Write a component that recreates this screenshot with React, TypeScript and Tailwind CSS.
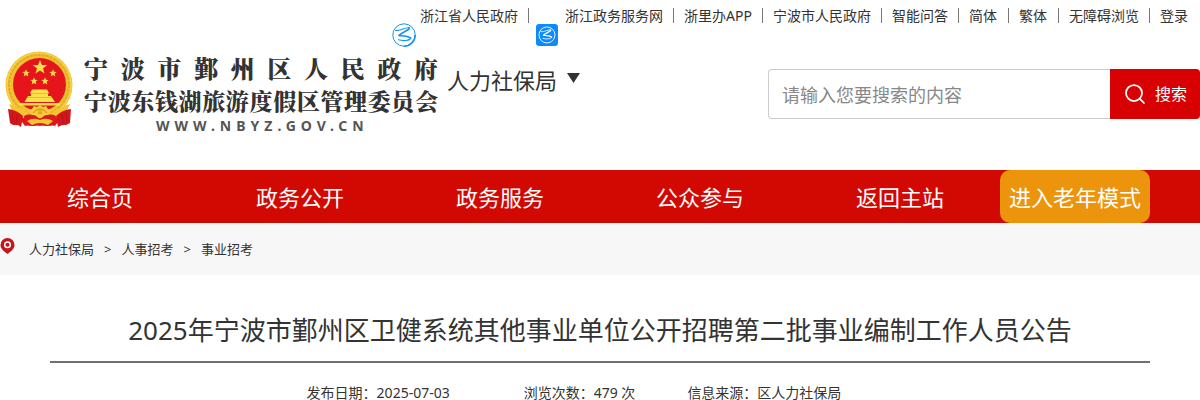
import { Search } from 'lucide-react';

const topLinks = [
  { label: '浙江省人民政府', icon: 'round' },
  { label: '浙江政务服务网', icon: 'square' },
  { label: '浙里办APP' },
  { label: '宁波市人民政府' },
  { label: '智能问答' },
  { label: '简体' },
  { label: '繁体' },
  { label: '无障碍浏览' },
  { label: '登录' },
];

const navItems = ['综合页', '政务公开', '政务服务', '公众参与', '返回主站'];

const crumbs = ['人力社保局', '人事招考', '事业招考'];

const Swirl = () => (
  <g fill="none" stroke="currentColor" strokeLinecap="round" strokeLinejoin="round">
    <path d="M3.5 7.5C8 8.5 12 4.2 17 4.8" strokeWidth="1.1" />
    <path d="M17 4.8C18.6 6.8 10 9 7.2 12.4" strokeWidth="1.8" />
    <path d="M7.2 12.4C11 13.4 16 12.6 18.6 15" strokeWidth="1.6" />
    <path d="M18.6 15C18 17.8 11 18.2 6.5 16.8" strokeWidth="1.2" />
  </g>
);

const RoundIcon = () => (
  <svg className="mt-[23px] mr-1 size-6 shrink-0 text-[#1494f0]" viewBox="0 0 24 24" aria-hidden="true">
    <circle cx="12" cy="12" r="11.2" fill="none" stroke="currentColor" strokeWidth="1" />
    <path d="M12 23.2A11.2 11.2 0 0 0 23.2 12" fill="none" stroke="currentColor" strokeWidth="1.6" />
    <Swirl />
  </svg>
);

const SquareIcon = () => (
  <svg className="mt-6 mr-[7px] size-[22px] shrink-0 text-white" viewBox="0 0 24 24" aria-hidden="true">
    <rect width="24" height="24" rx="3.5" fill="#0d8bfd" />
    <g transform="translate(2.6 2.6) scale(.78)">
      <circle cx="12" cy="12" r="11.2" fill="none" stroke="currentColor" strokeWidth="1.2" />
      <Swirl />
    </g>
  </svg>
);

const Emblem = () => (
  <svg className="h-[77px] w-[70px] shrink-0" viewBox="0 0 70 77" aria-hidden="true">
    <path d="M11 57L9 73L17 71L20 75L27 73L35 75L43 73L50 75L53 71L61 73L59 57Z" fill="#d91a1c" />
    <circle cx="34" cy="34" r="33.5" fill="#f1c232" />
    <circle cx="34" cy="34" r="30" fill="none" stroke="#e4ae24" strokeWidth="2" strokeDasharray="3 1" />
    <circle cx="34" cy="34" r="32" fill="none" stroke="#f7d64c" strokeWidth="1.2" />
    <circle cx="34.5" cy="33.5" r="26.5" fill="#e6151b" />
    <g fill="#fbe04a">
      <path d="M35 9L36.9 14.1H42.2L38 17.4L39.6 22.6L35 19.5L30.4 22.6L32 17.4L27.8 14.1H33.1Z" />
      <path d="M21 18.2L22 20.7L24.7 20.9L22.6 22.6L23.3 25.4L21 23.9L18.7 25.4L19.4 22.6L17.3 20.9L20 20.7Z" />
      <path d="M48 18.2L49 20.7L51.7 20.9L49.6 22.6L50.3 25.4L48 23.9L45.7 25.4L46.4 22.6L44.3 20.9L47 20.7Z" />
      <path d="M29 26.2L30 28.7L32.7 28.9L30.6 30.6L31.3 33.4L29 31.9L26.7 33.4L27.4 30.6L25.3 28.9L28 28.7Z" />
      <path d="M40 26.2L41 28.7L43.7 28.9L41.6 30.6L42.3 33.4L40 31.9L37.7 33.4L38.4 30.6L36.3 28.9L39 28.7Z" />
      <path d="M27 38.5H42L44 42H25ZM26 42H43V45H26ZM23 45H46L50 51H19.5Z" />
      <path d="M12 52H57L54 54.5H15Z" />
    </g>
    <path d="M25 42.5H44M22 46.5H47" stroke="#e6a01f" strokeWidth=".6" />
    <path d="M4 53Q20 57 29 67L17 67Q8 64 4 53ZM65 53Q50 57 41 67L53 67Q61 64 65 53Z" fill="#f3c52f" />
    <path d="M3 58Q12 59 18 65L16 76L13 74L8 74L5 72ZM66 58Q57 59 51 65L53 76L57 74L61 74L65 72Z" fill="#d3171a" />
    <path d="M8 61L7 72M12 63L11 73M61 61L62 72M57 63L58 73" stroke="#b81015" strokeWidth=".8" />
    <path d="M19 65Q27 61 35 68Q43 61 51 65L50 74Q42 76 35 74Q27 76 20 74Z" fill="#dd191c" />
    <path
      d="M35 54L38 56L41 55L43 58L47 59L45 62L43 64L39 64L35 66L31 64L27 64L25 62L23 59L27 58L29 55L32 56Z"
      fill="#f5cd3a"
    />
    <path d="M28 62Q35 54 42 62" fill="none" stroke="#d9801c" strokeWidth="1" />
    <circle cx="35" cy="61.5" r="2.2" fill="#e8a625" />
    <path d="M22 70Q28 66 35 69Q42 66 48 70L43 74Q35 70 27 74Z" fill="#f3c52f" />
  </svg>
);

const Pin = () => (
  <svg className="mb-1.5 h-4 w-[15px] shrink-0" viewBox="0 0 15 16" aria-hidden="true">
    <path d="M7.5 0A7 7 0 0 0 .5 7C.5 11 4 13 7.5 16C11 13 14.5 11 14.5 7A7 7 0 0 0 7.5 0Z" fill="#c5161c" />
    <circle cx="7.5" cy="6.8" r="2.8" fill="none" stroke="#fff" strokeWidth="1.5" />
  </svg>
);

export default function App() {
  return (
    <div className="bg-white font-['Noto_Sans','Noto_Sans_CJK_SC',sans-serif] text-[#333]">
      <div className="flex h-12 items-start justify-end text-sm whitespace-nowrap">
        {topLinks.map((link, index) => (
          <div key={link.label} className="flex items-start">
            {link.icon === 'round' && <RoundIcon />}
            {link.icon === 'square' && <SquareIcon />}
            <a
              href="#"
              className={`mt-2 h-[15px] min-w-[50px] pr-2.5 leading-4 ${
                index < topLinks.length - 1 ? 'border-r border-[#777]' : ''
              } ${index > 1 ? 'pl-2.5' : ''}`}
            >
              {link.label}
            </a>
            {index === 0 && <span className="w-[7px]" />}
          </div>
        ))}
      </div>

      <header className="flex h-[122px] items-start">
        <a href="#" className="mt-[3px] ml-[5px] flex">
          <Emblem />
          <div className="ml-[9px] w-[354px] font-['Noto_Serif_CJK_SC','Noto_Sans_CJK_SC',serif] font-black">
            <div className="h-[34px] text-2xl leading-[34px] [text-align-last:justify]">宁波市鄞州区人民政府</div>
            <div className="h-[33px] text-[23px] leading-[31px] [text-align-last:justify]">宁波东钱湖旅游度假区管理委员会</div>
            <div className="ml-[72px] font-['Noto_Sans',sans-serif] text-sm leading-4 font-bold tracking-[5px] text-[#555]">
              WWW.NBYZ.GOV.CN
            </div>
          </div>
        </a>
        <button type="button" className="mt-[17px] ml-[9px] flex items-center gap-2.5 text-[22px] leading-[30px]">
          人力社保局
          <svg className="mb-1 h-2.5 w-[13px]" viewBox="0 0 13 10" aria-hidden="true">
            <path d="M0 0H13L6.5 10Z" fill="#333" />
          </svg>
        </button>
        <form className="mt-[21px] ml-auto flex h-[50px] w-[36%]">
          <input
            type="text"
            aria-label="搜索内容"
            placeholder="请输入您要搜索的内容"
            className="min-w-0 flex-1 rounded-l border border-r-0 border-[#ccc] px-[13px] pt-0.5 text-lg placeholder:text-[#888]"
          />
          <button
            type="button"
            className="flex w-[90px] items-center justify-center gap-2 rounded-r bg-[#d70002] text-base text-white"
          >
            <Search className="size-6" strokeWidth={1.75} />
            搜索
          </button>
        </form>
      </header>

      <nav className="flex h-[53px] bg-[#d20903] text-[22px] leading-[54px] text-white">
        {navItems.map((item) => (
          <a key={item} href="#" className="w-1/6 text-center">
            {item}
          </a>
        ))}
        <a href="#" className="rounded-[10px] bg-[#ec950c] px-[9px]">
          进入老年模式
        </a>
      </nav>

      <div className="flex h-[52px] items-center bg-[#f7f7f7] text-[13px]">
        <Pin />
        <ol className="ml-3.5 flex pt-px">
          {crumbs.map((crumb, index) => (
            <li key={crumb}>
              {index > 0 && <span className="mx-2.5">&gt;</span>}
              <a href="#">{crumb}</a>
            </li>
          ))}
        </ol>
      </div>

      <main className="mx-[50px] pt-[30px]">
        <h1 className="border-b-2 border-[#707070] pb-1.5 text-center text-[26px] leading-[50px]">
          2025年宁波市鄞州区卫健系统其他事业单位公开招聘第二批事业编制工作人员公告
        </h1>
        <div className="mt-5 flex justify-center text-sm leading-5">
          <span className="mr-[74px]">发布日期：2025-07-03</span>
          <span className="mr-[52px]">浏览次数：479 次</span>
          <span className="mr-[52px]">信息来源：区人力社保局</span>
        </div>
      </main>
    </div>
  );
}
